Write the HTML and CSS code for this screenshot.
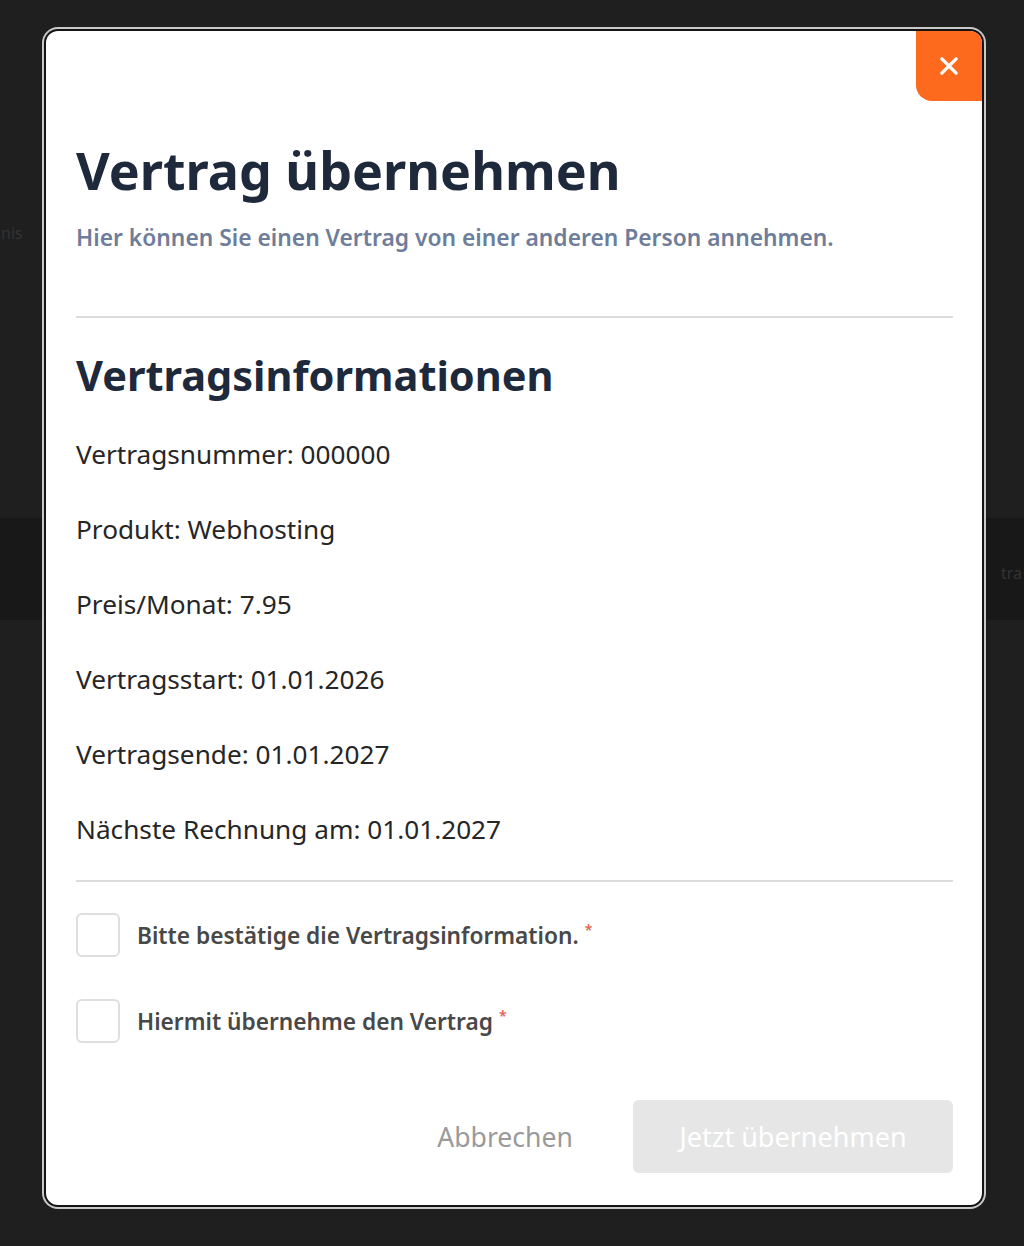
FILE: index.html
```html
<!DOCTYPE html>
<html lang="de">
<head>
<meta charset="utf-8">
<title>Vertrag übernehmen</title>
<link rel="stylesheet" href="styles.css">
</head>
<body>
<div class="backdrop">
  <div class="bg-band"></div>
  <span class="bg-text bg-left">nis</span>
  <span class="bg-text bg-right">tra</span>
  <div class="modal">
    <button class="close" aria-label="Schließen">
      <svg width="22" height="22" viewBox="0 0 20 20"><path d="M3.5 3.5 L16.5 16.5 M16.5 3.5 L3.5 16.5" stroke="#fff" stroke-width="3" stroke-linecap="round"/></svg>
    </button>
    <h1 class="title">Vertrag übernehmen</h1>
    <p class="subtitle">Hier können Sie einen Vertrag von einer anderen Person annehmen.</p>
    <hr class="divider">
    <h2 class="section">Vertragsinformationen</h2>
    <ul class="info">
      <li>Vertragsnummer: 000000</li>
      <li>Produkt: Webhosting</li>
      <li>Preis/Monat: 7.95</li>
      <li>Vertragsstart: 01.01.2026</li>
      <li>Vertragsende: 01.01.2027</li>
      <li>Nächste Rechnung am: 01.01.2027</li>
    </ul>
    <hr class="divider divider-2">
    <label class="check">
      <span class="box"></span>
      <span class="label">Bitte bestätige die Vertragsinformation.<span class="req">*</span></span>
    </label>
    <label class="check">
      <span class="box"></span>
      <span class="label">Hiermit übernehme den Vertrag<span class="req">*</span></span>
    </label>
    <div class="actions">
      <button class="cancel">Abbrechen</button>
      <button class="submit" disabled>Jetzt übernehmen</button>
    </div>
  </div>
</div>
</body>
</html>
```
FILE: styles.css
```css
html, body {
  margin: 0;
  padding: 0;
}
body {
  background: #1f1f1f;
  font-family: "Noto Sans", "Lato", sans-serif;
  width: 1024px;
  height: 1246px;
  overflow: hidden;
}
.backdrop {
  position: relative;
  width: 1024px;
  height: 1246px;
  padding-top: 31px;
  box-sizing: border-box;
}
.bg-band {
  position: absolute;
  left: 0;
  right: 0;
  top: 518px;
  height: 102px;
  background: #181818;
}
.bg-text {
  position: absolute;
  color: #333;
  font-size: 16px;
}
.bg-left { left: 1px; top: 222px; }
.bg-right { right: 2px; top: 562px; }
.modal {
  position: relative;
  margin-left: 46px;
  width: 936px;
  height: 1174px;
  box-sizing: border-box;
  background: #fff;
  border-radius: 12px;
  box-shadow: 0 0 0 2px #141414, 0 0 0 4px #c9c9c9;
  padding: 0 29px 0 30px;
  display: flex;
  flex-direction: column;
}
.close {
  position: absolute;
  top: 0;
  right: 0;
  width: 66px;
  height: 70px;
  border: 0;
  padding: 0;
  background: #fd6a1d;
  border-radius: 0 12px 0 16px;
  display: flex;
  align-items: center;
  justify-content: center;
}
.title {
  margin: 107px 0 0;
  font-size: 52px;
  line-height: 64px;
  font-weight: 700;
  color: #1e2a3b;
}
.subtitle {
  margin: 22px 0 0;
  font-size: 22.8px;
  line-height: 28px;
  font-weight: 600;
  color: #6e7d99;
}
.divider {
  margin: 64px 0 0;
  border: 0;
  height: 2px;
  background: #dcdcdc;
}
.section {
  margin: 31px 0 0;
  font-size: 41.5px;
  line-height: 52px;
  font-weight: 700;
  color: #1e2a3b;
}
.info {
  list-style: none;
  margin: 36px 0 0;
  padding: 0;
  display: flex;
  flex-direction: column;
  gap: 41px;
}
.info li {
  font-size: 26.2px;
  line-height: 34px;
  color: #262626;
}
.divider-2 {
  margin-top: 34px;
}
.check {
  display: flex;
  align-items: center;
  gap: 17px;
  margin-top: 31px;
}
.check + .check {
  margin-top: 42px;
}
.box {
  width: 40px;
  height: 40px;
  border: 2px solid #dedede;
  border-radius: 6px;
  flex: none;
}
.label {
  font-size: 22.7px;
  font-weight: 600;
  color: #484848;
}
.req {
  color: #e8604c;
  font-size: 14px;
  vertical-align: top;
  margin-left: 6px;
}
.actions {
  margin-top: 57px;
  display: flex;
  justify-content: flex-end;
  align-items: center;
  gap: 60px;
}
.cancel {
  border: 0;
  background: none;
  font-family: inherit;
  font-size: 26.6px;
  color: #9a9a9a;
  padding: 0;
}
.submit {
  width: 320px;
  height: 73px;
  border: 0;
  border-radius: 6px;
  background: #e6e6e6;
  color: #fff;
  font-family: inherit;
  font-size: 27px;
}
```
